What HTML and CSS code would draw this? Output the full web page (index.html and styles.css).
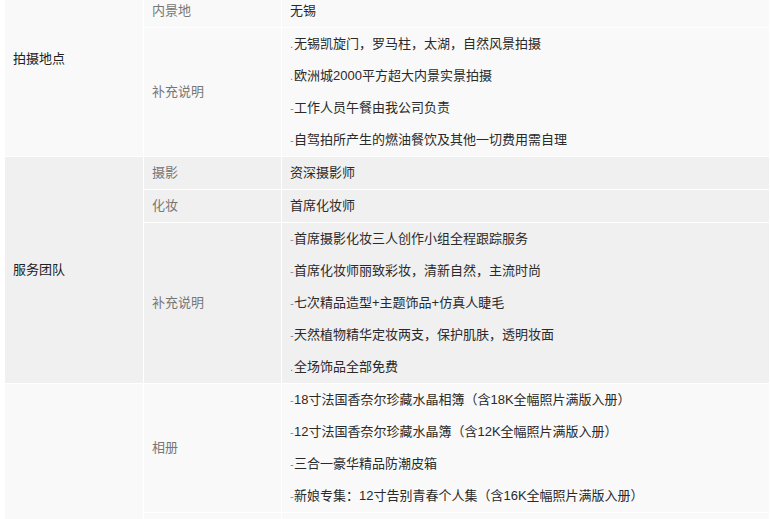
FILE: index.html
```html
<!DOCTYPE html>
<html lang="zh-CN">
<head>
<meta charset="utf-8">
<title>服务详情</title>
<link rel="stylesheet" href="styles.css">
</head>
<body>
<table class="spec">
  <colgroup>
    <col class="c1"><col class="c2"><col class="c3">
  </colgroup>
  <tbody class="g-light">
    <tr>
      <th class="group" rowspan="3">拍摄地点</th>
      <td class="label">外景地</td>
      <td class="val">无锡</td>
    </tr>
    <tr>
      <td class="label">内景地</td>
      <td class="val">无锡</td>
    </tr>
    <tr>
      <td class="label">补充说明</td>
      <td class="val">
        <p><span class="b dot">.</span>无锡凯旋门，罗马柱，太湖，自然风景拍摄</p>
        <p><span class="b dot">.</span>欧洲城2000平方超大内景实景拍摄</p>
        <p><span class="b">-</span>工作人员午餐由我公司负责</p>
        <p><span class="b">-</span>自驾拍所产生的燃油餐饮及其他一切费用需自理</p>
      </td>
    </tr>
  </tbody>
  <tbody class="g-dark">
    <tr>
      <th class="group" rowspan="3">服务团队</th>
      <td class="label">摄影</td>
      <td class="val">资深摄影师</td>
    </tr>
    <tr>
      <td class="label">化妆</td>
      <td class="val">首席化妆师</td>
    </tr>
    <tr>
      <td class="label">补充说明</td>
      <td class="val">
        <p><span class="b">-</span>首席摄影化妆三人创作小组全程跟踪服务</p>
        <p><span class="b">-</span>首席化妆师丽致彩妆，清新自然，主流时尚</p>
        <p><span class="b">-</span>七次精品造型+主题饰品+仿真人睫毛</p>
        <p><span class="b">-</span>天然植物精华定妆两支，保护肌肤，透明妆面</p>
        <p><span class="b dot">.</span>全场饰品全部免费</p>
      </td>
    </tr>
  </tbody>
  <tbody class="g-light">
    <tr>
      <th class="group" rowspan="2">拍摄产品</th>
      <td class="label">相册</td>
      <td class="val">
        <p><span class="b">-</span>18寸法国香奈尔珍藏水晶相簿（含18K全幅照片满版入册）</p>
        <p><span class="b">-</span>12寸法国香奈尔珍藏水晶簿（含12K全幅照片满版入册）</p>
        <p><span class="b">-</span>三合一豪华精品防潮皮箱</p>
        <p><span class="b">-</span>新娘专集：12寸告别青春个人集（含16K全幅照片满版入册）</p>
      </td>
    </tr>
    <tr>
      <td class="label">精修照片</td>
      <td class="val">
        <p><span class="b">-</span>精修照片全部入册</p>
        <p><span class="b">-</span>赠送全部底片</p>
        <p><span class="b">-</span>24寸油画放大一张</p>
        <p><span class="b">-</span>12寸摆台两个</p>
        <p><span class="b">-</span>精美光盘一张</p>
      </td>
    </tr>
  </tbody>
</table>
</body>
</html>
```

FILE: styles.css
```css
html, body {
  margin: 0;
  padding: 0;
  background: #ffffff;
  overflow: hidden;
}

body {
  font-family: "Liberation Sans", "Noto Sans CJK SC", sans-serif;
  font-size: 13px;
  color: #333333;
}

.spec {
  margin: -39px 0 0 4px;
  width: 766px;
  border-collapse: separate;
  border-spacing: 1px;
  background: #ffffff;
  table-layout: fixed;
}

.c1 { width: 138px; }
.c2 { width: 137px; }

.spec th,
.spec td {
  padding: 0 8px;
  height: 32px;
  box-sizing: border-box;
  text-align: left;
  vertical-align: middle;
  font-weight: normal;
  line-height: 32px;
}

.g-light th, .g-light td { background: #f9f9f9; }
.g-dark th, .g-dark td { background: #f0f0f0; }

.group { color: #222222; }
.label { color: #777777; }
.val { color: #2a2a2a; white-space: nowrap; }

.val p {
  margin: 0;
  height: 32px;
  line-height: 32px;
  overflow: hidden;
}

.b {
  display: inline-block;
  width: 4px;
  font-size: 11px;
  line-height: 1;
  color: #7a8aa6;
}

.b.dot { color: #6a7fa8; }
```
